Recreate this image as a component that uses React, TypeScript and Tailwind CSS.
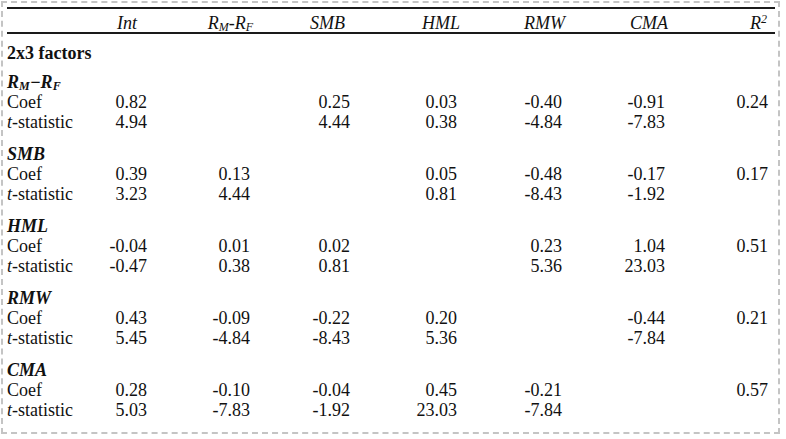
import React from "react";

const GRID = "grid grid-cols-[88px_52px_103px_100px_107px_105px_103px_103px]";

type Vals = (string | null)[];

function DataRow({ label, vals }: { label: React.ReactNode; vals: Vals }) {
  return (
    <div className={`${GRID} h-[20px] leading-[20px]`}>
      <div className="whitespace-nowrap">{label}</div>
      {vals.map((v, i) => (
        <div key={i} className="text-right whitespace-nowrap">
          {v ?? ""}
        </div>
      ))}
    </div>
  );
}

function Section({
  title,
  coef,
  tstat,
  first,
}: {
  title: React.ReactNode;
  coef: Vals;
  tstat: Vals;
  first?: boolean;
}) {
  return (
    <div className={first ? "mt-[9px]" : "mt-[12px]"}>
      <div className="h-[20px] leading-[20px] font-bold italic whitespace-nowrap">{title}</div>
      <DataRow label="Coef" vals={coef} />
      <DataRow
        label={
          <>
            <span className="italic">t</span>-statistic
          </>
        }
        vals={tstat}
      />
    </div>
  );
}

export default function App() {
  return (
    <div className="w-[786px] h-[439px] bg-white text-[#111] text-[18px] font-['Liberation_Serif'] overflow-hidden">
      <div className="ml-[1px] mt-[1px] w-[779px] h-[433px] border-2 border-dashed border-[#c4c4c4] px-[4px] pt-[4px]">
        <div className="w-[768px]">
          <div className="h-[2px] bg-[#1a1a1a]" />
          <div className={`${GRID} pt-[5px] h-[23px] leading-[18px] italic`}>
            <div />
            <div className="text-right pr-[10px]">Int</div>
            <div className="text-right translate-x-[3px] whitespace-nowrap">
              R<sub className="text-[12px] bottom-[-2px]">M</sub>-R<sub className="text-[12px] bottom-[-2px]">F</sub>
            </div>
            <div className="text-right pr-[5px]">SMB</div>
            <div className="text-right translate-x-[3px]">HML</div>
            <div className="text-right translate-x-[3px]">RMW</div>
            <div className="text-right translate-x-[3px]">CMA</div>
            <div className="text-right pr-[1px]">
              R<sup className="text-[12px]">2</sup>
            </div>
          </div>
          <div className="h-[2px] bg-[#1a1a1a]" />
          <div className="mt-[9px] h-[20px] leading-[20px] font-bold">2x3 factors</div>

          <Section
            first
            title={
              <>
                R<sub className="text-[12px] bottom-[-2px]">M</sub>
                <span>−</span>R<sub className="text-[12px] bottom-[-2px]">F</sub>
              </>
            }
            coef={["0.82", null, "0.25", "0.03", "-0.40", "-0.91", "0.24"]}
            tstat={["4.94", null, "4.44", "0.38", "-4.84", "-7.83", null]}
          />
          <Section
            title="SMB"
            coef={["0.39", "0.13", null, "0.05", "-0.48", "-0.17", "0.17"]}
            tstat={["3.23", "4.44", null, "0.81", "-8.43", "-1.92", null]}
          />
          <Section
            title="HML"
            coef={["-0.04", "0.01", "0.02", null, "0.23", "1.04", "0.51"]}
            tstat={["-0.47", "0.38", "0.81", null, "5.36", "23.03", null]}
          />
          <Section
            title="RMW"
            coef={["0.43", "-0.09", "-0.22", "0.20", null, "-0.44", "0.21"]}
            tstat={["5.45", "-4.84", "-8.43", "5.36", null, "-7.84", null]}
          />
          <Section
            title="CMA"
            coef={["0.28", "-0.10", "-0.04", "0.45", "-0.21", null, "0.57"]}
            tstat={["5.03", "-7.83", "-1.92", "23.03", "-7.84", null, null]}
          />
        </div>
      </div>
    </div>
  );
}
